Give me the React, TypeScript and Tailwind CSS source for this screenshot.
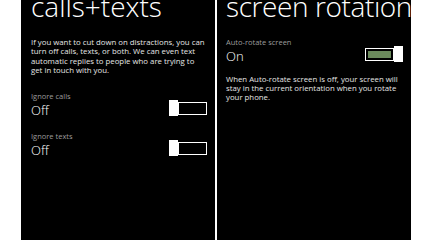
const font = { fontFamily: '"Open Sans", "Noto Sans", sans-serif' };

function Toggle({ on }: { on: boolean }) {
  const thumb = <div className="h-[16px] w-[9px] bg-white" />;
  const track = (
    <div className="flex h-[13px] w-[29px] border border-white p-[2px]">
      {on && <div className="h-full w-full bg-[#6b8a5c]" />}
    </div>
  );
  return (
    <div className="flex items-center">
      {on ? (
        <>
          {track}
          {thumb}
        </>
      ) : (
        <>
          {thumb}
          {track}
        </>
      )}
    </div>
  );
}

function Setting({ label, value, on }: { label: string; value: string; on: boolean }) {
  return (
    <div className="flex items-end justify-between pr-[8px]">
      <div>
        <div className="text-[7.5px] leading-[10px] text-[#9c9c9c]">{label}</div>
        <div className="mt-[1px] text-[13px] font-light leading-[16px] text-white">{value}</div>
      </div>
      <div className="mb-[2px]">
        <Toggle on={on} />
      </div>
    </div>
  );
}

export default function App() {
  return (
    <div className="flex h-[240px] w-[433px] overflow-hidden bg-white" style={font}>
      <div className="w-[21px] shrink-0" />

      {/* calls+texts */}
      <div className="h-full w-[194px] shrink-0 overflow-hidden bg-black pl-[10px] text-white">
        <h1 className="-mt-[8px] whitespace-nowrap text-[28px] font-light leading-[28px]">calls+texts</h1>
        <p className="mt-[18px] w-[176px] text-[7.8px] leading-[9.3px] text-[#e6e6e6]">
          If you want to cut down on distractions, you can turn off calls, texts, or both. We can even text
          automatic replies to people who are trying to get in touch with you.
        </p>
        <div className="mt-[16px]">
          <Setting label="Ignore calls" value="Off" on={false} />
        </div>
        <div className="mt-[13px]">
          <Setting label="Ignore texts" value="Off" on={false} />
        </div>
      </div>

      <div className="w-[2px] shrink-0" />

      {/* screen rotation */}
      <div className="h-full w-[194px] shrink-0 overflow-hidden bg-black pl-[9px] text-white">
        <h1 className="-mt-[8px] whitespace-nowrap text-[28px] font-light leading-[28px] tracking-[-0.4px]">
          screen rotation
        </h1>
        <div className="mt-[17px]">
          <Setting label="Auto-rotate screen" value="On" on={true} />
        </div>
        <p className="mt-[11px] w-[174px] text-[7.8px] leading-[8.8px] text-[#e6e6e6]">
          When Auto-rotate screen is off, your screen will stay in the current orientation when you rotate your
          phone.
        </p>
      </div>
    </div>
  );
}
